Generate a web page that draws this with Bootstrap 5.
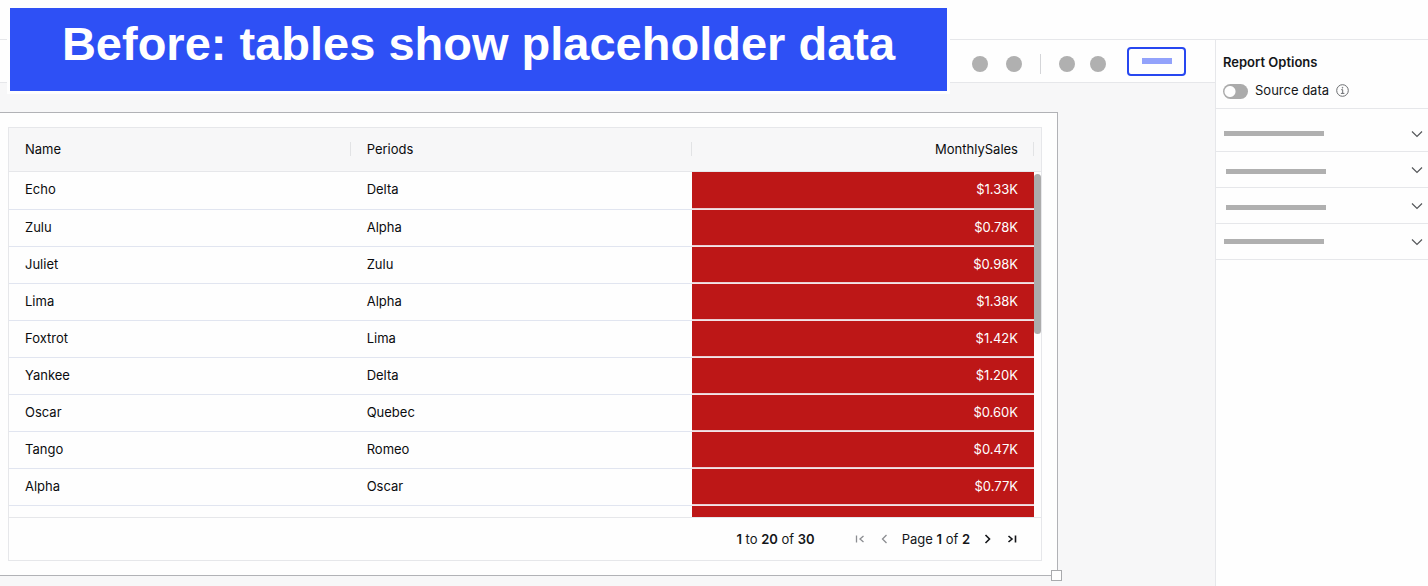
<!DOCTYPE html>
<html lang="en">
<head>
<meta charset="utf-8">
<meta name="viewport" content="width=device-width, initial-scale=1">
<title>Report designer</title>
<link href="https://cdn.jsdelivr.net/npm/bootstrap@5.3.0/dist/css/bootstrap.min.css" rel="stylesheet">
<style>
  :root { --line: #e6e7ea; --muted-shape: #b0b0b0; --brand: #2e50f5; }
  body { font: 13px/20px Inter, "Liberation Sans", sans-serif; color: #141619; background: #fefefe; }
  .top-strip { height: 40px; border-bottom: 1px solid var(--line); }

  .banner { top: 8px; left: 10px; right: 481px; height: 83px; padding-top: 8px; background: var(--brand);
    box-shadow: 0 0 0 3px #fefefe; font: bold 47px/56px "Liberation Sans", Arial, sans-serif; color: #fff; }

  .toolbar { height: 43px; padding-right: 29px; border-bottom: 1px solid var(--line); }
  .tool-set { gap: 18px; margin-top: 5px; margin-right: 21px; }
  .tool-pair { gap: 15px; }
  .dot-btn { width: 16px; height: 16px; border: 0; padding: 0; border-radius: 50%; background: var(--muted-shape); }
  .tool-rule { width: 1px; height: 20px; background: #d4d5d8; }
  .outline-btn { width: 59px; height: 29px; border: 2px solid #2747f0; border-radius: 4px; padding: 0; background: #fefefe; }
  .outline-btn span { width: 30px; height: 6px; background: #92a2fb; }

  .canvas { background: #f7f7f8; padding: 29px 157px 10px 0; }
  .report-frame { background: #fefefe; border: solid #b1b2b6; border-width: 1px 1px 1px 0; padding: 14px 15px 14px 8px; }
  .resize-handle { right: -5px; bottom: -6px; width: 11px; height: 11px; border: 1px solid #a9aaad; background: #fefefe; }
  .grid-box { border: 1px solid var(--line); }

  .sales-table { table-layout: fixed; color: #0b0c0e; }
  .sales-table th, .sales-table td { padding: 0 16px; vertical-align: middle; white-space: nowrap; }
  .sales-table thead th { height: 43px; font-weight: 400; border-bottom: 1px solid var(--line);
    background: linear-gradient(#e2e3e5, #e2e3e5) right center / 1px 14px no-repeat #f7f7f8; }
  .sales-table tbody td { height: 37px; padding-bottom: 2px; border-bottom: 1px solid #e1e5f0; background: transparent; }
  .sales-table tbody tr:first-child td { height: 38px; }
  .sales-table tbody td.amount { background: #bd1717; color: #fff; border-bottom-color: #f3e3e6; box-shadow: inset 0 -1px #e9cfd2; }
  .sales-table .gutter, .sales-table tbody .gutter { padding: 0; border-bottom-color: transparent; }
  .sales-table thead .gutter { background: #f7f7f8; border-bottom-color: var(--line); }
  .col-gutter { width: 7px; }
  .scroll-thumb { right: 0; top: 46px; width: 7px; height: 160px; border-radius: 4px; background: #acacac; }

  .grid-footer { height: 43px; padding-right: 21px; border-top: 1px solid var(--line); }
  .grid-footer b { font-weight: 600; }
  .row-count { margin-right: 37px; }
  .page-label { margin: 0 10px; }
  .page-btn { width: 16px; height: 16px; padding: 0; border: 0; background: none; color: #141619; }
  .page-btn:disabled { color: #8b8d91; }
  svg { display: block; fill: none; stroke: currentColor; }

  .options { width: 213px; border-left: 1px solid var(--line); background: #fefefe; }
  .options-head { height: 69px; padding: 12px 7px 0; border-bottom: 1px solid var(--line); }
  .options-head h2 { font-size: 13px; line-height: 20px; font-weight: 600; margin-bottom: 8px; }
  .source-switch { appearance: none; width: 25px; height: 15px; margin: 2px 7px 0 0; border-radius: 8px;
    background: radial-gradient(circle at 7px 50%, #fefefe 5px, transparent 6px) #ababab; }
  .info-btn { border: 0; padding: 0; margin-left: 7px; background: none; color: #6b6d70; }
  .option-list { padding-top: 7px; }
  .option-row { height: 36px; padding: 0 5px 0 8px; border: 0; border-bottom: 1px solid var(--line); background: none; color: #55575a; }
  .option-row.nested { padding-left: 10px; }
  .option-row .bar { width: 100px; height: 5px; background: var(--muted-shape); }
  .option-row.nested .bar { margin-top: 3px; }
</style>
</head>
<body class="vh-100 d-flex flex-column overflow-hidden position-relative">
  <header class="top-strip flex-shrink-0"></header>
  <h1 class="banner position-absolute z-3 mb-0 text-nowrap text-center">Before: tables show placeholder data</h1>

  <div class="d-flex flex-grow-1 overflow-hidden">
    <main class="d-flex flex-column flex-grow-1 overflow-hidden">
      <div class="toolbar d-flex flex-shrink-0 align-items-center justify-content-end">
        <div class="tool-set d-flex align-items-center">
          <button type="button" class="dot-btn" aria-label="Undo"></button>
          <button type="button" class="dot-btn" aria-label="Redo"></button>
          <span class="tool-rule"></span>
          <span class="tool-pair d-flex">
            <button type="button" class="dot-btn" aria-label="Preview"></button>
            <button type="button" class="dot-btn" aria-label="Settings"></button>
          </span>
        </div>
        <button type="button" class="outline-btn d-flex align-items-center justify-content-center" aria-label="Save"><span></span></button>
      </div>

      <section class="canvas d-flex flex-column flex-grow-1 overflow-hidden">
        <div class="report-frame position-relative d-flex flex-column flex-grow-1">
          <div class="grid-box d-flex flex-column flex-grow-1">
            <div class="position-relative overflow-hidden flex-grow-1 h-0" style="height:0">
              <table class="table sales-table w-100 mb-0">
                <colgroup><col><col><col><col class="col-gutter"></colgroup>
                <thead>
                  <tr><th scope="col">Name</th><th scope="col">Periods</th><th scope="col" class="text-end">MonthlySales</th><th class="gutter"></th></tr>
                </thead>
                <tbody>
                  <tr><td>Echo</td><td>Delta</td><td class="amount text-end">$1.33K</td><td class="gutter"></td></tr>
                  <tr><td>Zulu</td><td>Alpha</td><td class="amount text-end">$0.78K</td><td class="gutter"></td></tr>
                  <tr><td>Juliet</td><td>Zulu</td><td class="amount text-end">$0.98K</td><td class="gutter"></td></tr>
                  <tr><td>Lima</td><td>Alpha</td><td class="amount text-end">$1.38K</td><td class="gutter"></td></tr>
                  <tr><td>Foxtrot</td><td>Lima</td><td class="amount text-end">$1.42K</td><td class="gutter"></td></tr>
                  <tr><td>Yankee</td><td>Delta</td><td class="amount text-end">$1.20K</td><td class="gutter"></td></tr>
                  <tr><td>Oscar</td><td>Quebec</td><td class="amount text-end">$0.60K</td><td class="gutter"></td></tr>
                  <tr><td>Tango</td><td>Romeo</td><td class="amount text-end">$0.47K</td><td class="gutter"></td></tr>
                  <tr><td>Alpha</td><td>Oscar</td><td class="amount text-end">$0.77K</td><td class="gutter"></td></tr>
                  <tr><td></td><td></td><td class="amount"></td><td class="gutter"></td></tr>
                </tbody>
              </table>
              <div class="scroll-thumb position-absolute"></div>
            </div>
            <div class="grid-footer d-flex flex-shrink-0 align-items-center justify-content-end">
              <span class="row-count"><b>1</b> to <b>20</b> of <b>30</b></span>
              <nav class="d-flex align-items-center" aria-label="Pages">
                <button type="button" class="page-btn me-2" disabled aria-label="First page"><svg width="16" height="16" stroke-width="1.3"><path d="M4.5 4.5v7M11.5 5 8 8l3.500 3"/></svg></button>
                <button type="button" class="page-btn" disabled aria-label="Previous page"><svg width="16" height="16" stroke-width="1.3"><path d="M10.500 4 6.500 8l4 4"/></svg></button>
                <span class="page-label">Page <b>1</b> of <b>2</b></span>
                <button type="button" class="page-btn" aria-label="Next page"><svg width="16" height="16" stroke-width="1.6"><path d="m5.500 4 4 4-4 4"/></svg></button>
                <button type="button" class="page-btn ms-2" aria-label="Last page"><svg width="16" height="16" stroke-width="1.6"><path d="M4.500 5 8 8l-3.500 3M11.500 4.500v7"/></svg></button>
              </nav>
            </div>
          </div>
          <div class="resize-handle position-absolute"></div>
        </div>
      </section>
    </main>

    <aside class="options flex-shrink-0">
      <div class="options-head">
        <h2>Report Options</h2>
        <div class="d-flex align-items-center">
          <input type="checkbox" role="switch" class="source-switch" id="sourceData">
          <label for="sourceData">Source data</label>
          <button type="button" class="info-btn" aria-label="About source data"><svg width="13" height="13"><circle cx="6.500" cy="6.500" r="5.800"/><path d="M5.200 5.700h1.500v3.600M4.900 9.400h3.500"/><circle cx="6.500" cy="3.700" r=".5" fill="currentColor" stroke-width=".5"/></svg></button>
        </div>
      </div>
      <div class="option-list">
        <button type="button" class="option-row w-100 d-flex align-items-center justify-content-between" aria-label="Section 1"><span class="bar"></span><svg width="12" height="8" stroke-width="1.2"><path d="m1 1.500 5 5 5-5"/></svg></button>
        <button type="button" class="option-row nested w-100 d-flex align-items-center justify-content-between" aria-label="Section 2"><span class="bar"></span><svg width="12" height="8" stroke-width="1.2"><path d="m1 1.500 5 5 5-5"/></svg></button>
        <button type="button" class="option-row nested w-100 d-flex align-items-center justify-content-between" aria-label="Section 3"><span class="bar"></span><svg width="12" height="8" stroke-width="1.2"><path d="m1 1.500 5 5 5-5"/></svg></button>
        <button type="button" class="option-row w-100 d-flex align-items-center justify-content-between" aria-label="Section 4"><span class="bar"></span><svg width="12" height="8" stroke-width="1.2"><path d="m1 1.500 5 5 5-5"/></svg></button>
      </div>
    </aside>
  </div>
<script src="https://cdn.jsdelivr.net/npm/bootstrap@5.3.0/dist/js/bootstrap.bundle.min.js"></script>
</body>
</html>
